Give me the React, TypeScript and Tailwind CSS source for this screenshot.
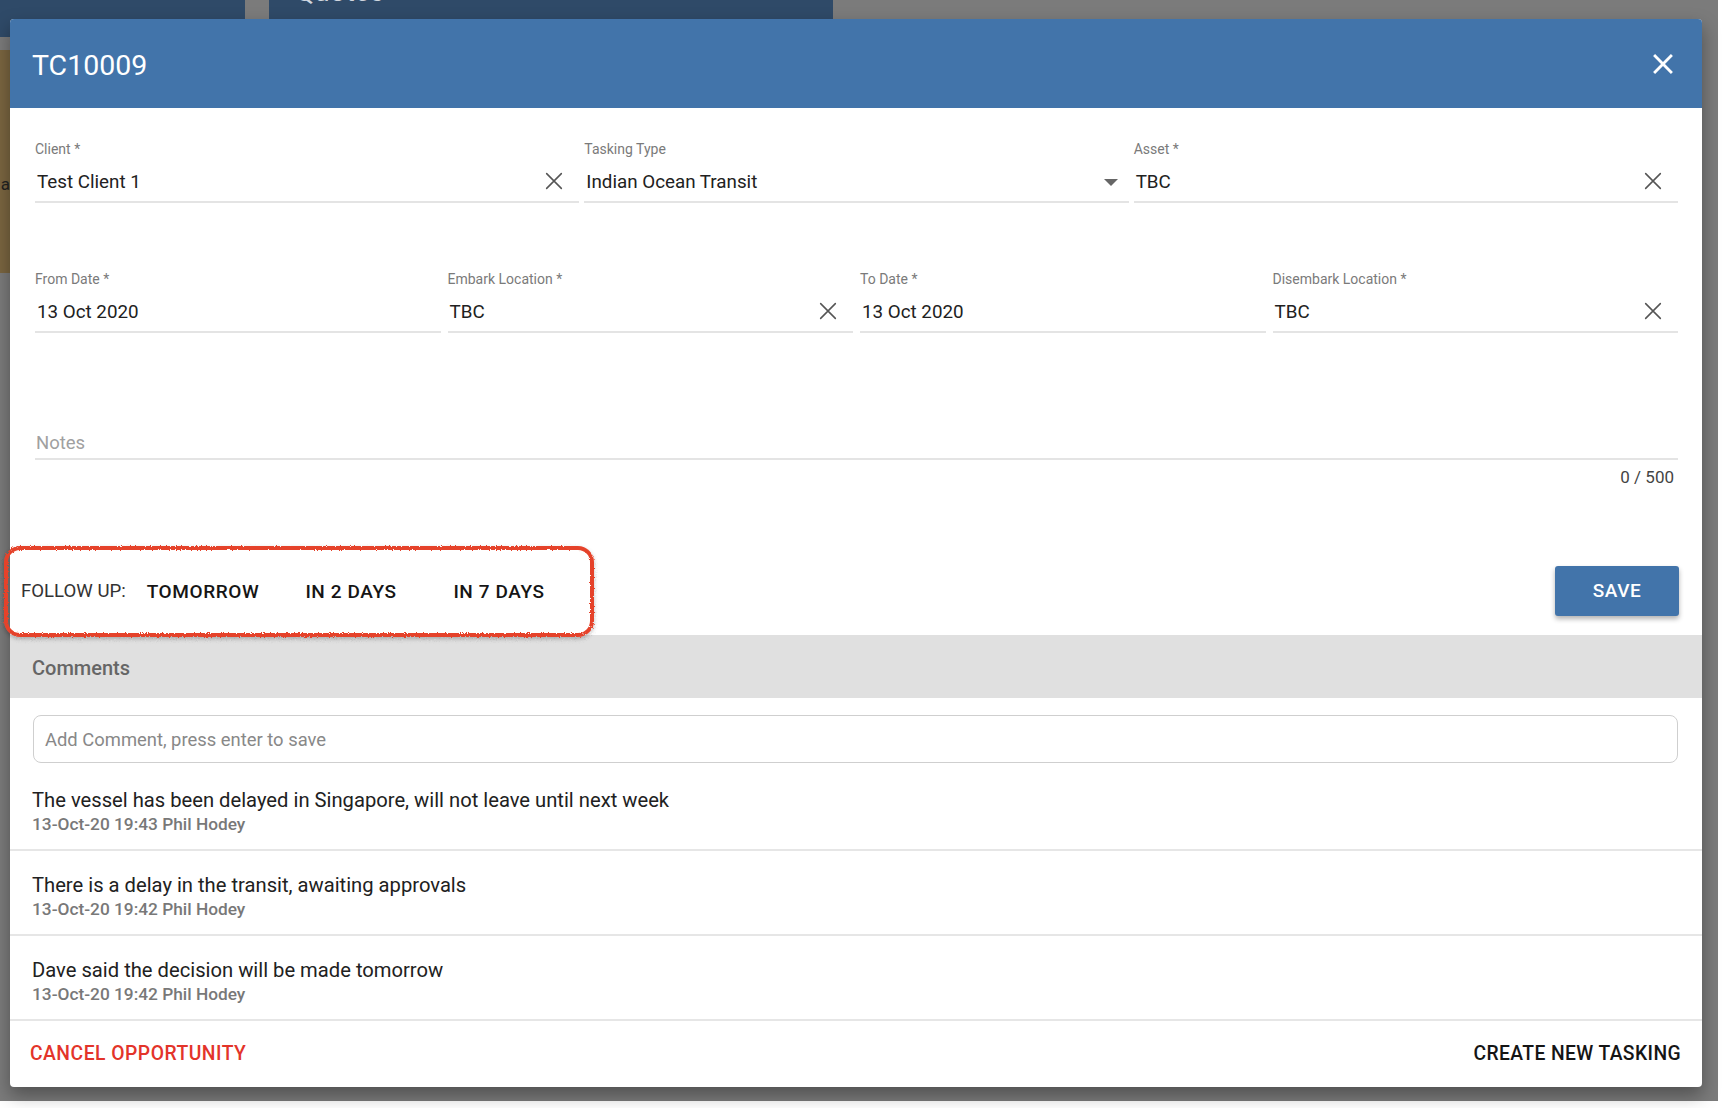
import React from "react";

const ClearIcon: React.FC<{ className?: string }> = ({ className }) => (
  <svg viewBox="0 0 24 24" className={className} fill="none" stroke="currentColor" strokeWidth={1.7} strokeLinecap="round">
    <path d="M4 4l16 16M20 4L4 20" />
  </svg>
);

const CloseIcon: React.FC<{ className?: string }> = ({ className }) => (
  <svg viewBox="0 0 24 24" className={className} fill="currentColor">
    <path d="M19 6.41 17.59 5 12 10.59 6.41 5 5 6.41 10.59 12 5 17.59 6.41 19 12 13.41 17.59 19 19 17.59 13.41 12z" />
  </svg>
);

type FieldProps = {
  label: string;
  value: string;
  clearable?: boolean;
  dropdown?: boolean;
};

const Field: React.FC<FieldProps> = ({ label, value, clearable, dropdown }) => (
  <div className="flex flex-col">
    <span className="text-[14px] leading-[16px] text-[#7a7a7a]">{label}</span>
    <div className="mt-[13px] flex h-[33px] items-start border-b-2 border-[#e4e4e4] pb-[7px]">
      <span className="flex-1 pl-[2px] text-[18.8px] leading-[24px] text-[#212121]">{value}</span>
      {clearable && <ClearIcon className="mr-[14px] h-[22px] w-[22px] text-[#555]" />}
      {dropdown && (
        <svg viewBox="0 0 14 7" className="mr-[11px] mt-[9px] h-[7px] w-[14px] text-[#666]" fill="currentColor">
          <path d="M0 0h14L7 7z" />
        </svg>
      )}
    </div>
  </div>
);

const comments = [
  { text: "The vessel has been delayed in Singapore, will not leave until next week", meta: "13-Oct-20 19:43 Phil Hodey" },
  { text: "There is a delay in the transit, awaiting approvals", meta: "13-Oct-20 19:42 Phil Hodey" },
  { text: "Dave said the decision will be made tomorrow", meta: "13-Oct-20 19:42 Phil Hodey" },
];

export default function App() {
  return (
    <div className="h-[1108px] w-[1722px] overflow-hidden bg-white font-['Roboto',sans-serif]">
      {/* marker-pen look for the highlight ring */}
      <svg width="0" height="0" className="absolute">
        <filter id="marker">
          <feTurbulence type="fractalNoise" baseFrequency="0.8" numOctaves="2" seed="3" />
          <feDisplacementMap in="SourceGraphic" scale="3" />
        </filter>
      </svg>
      <div className="relative h-[1101px] w-[1718px] bg-[#7b7b7b]">
        {/* page behind the dialog */}
        <div className="flex h-[37px]">
          <div className="w-[245px] bg-[#2f4a68]" />
          <div className="w-[24px]" />
          <div className="h-[19px] w-[564px] overflow-hidden bg-[#2f4a68]">
            <span className="-mt-[22px] ml-[26px] block text-[28px] leading-[28px] text-[#cfd6df]">Quotes</span>
          </div>
        </div>
        <div className="mt-[13px] flex h-[223px] w-[10px] items-start justify-end overflow-hidden bg-[#7a6540] pt-[126px]">
          <span className="text-[17px] leading-none text-[#222]">a</span>
        </div>

        {/* dialog */}
        <div className="absolute left-[10px] top-[19px] flex w-[1692px] flex-col rounded-[4px] bg-white shadow-[0_8px_18px_rgba(0,0,0,0.35)]">
          <div className="flex h-[89px] items-center justify-between rounded-t-[4px] bg-[#4274aa] pl-[22px] pr-[22px]">
            <h1 className="mt-[5px] text-[28.5px] font-normal leading-none text-white">TC10009</h1>
            <CloseIcon className="h-[34px] w-[34px] text-white" />
          </div>

          <div className="flex flex-col pl-[25px] pr-[24px] pt-[33px]">
            <div className="grid grid-cols-3 gap-x-[5px]">
              <Field label="Client *" value="Test Client 1" clearable />
              <Field label="Tasking Type" value="Indian Ocean Transit" dropdown />
              <Field label="Asset *" value="TBC" clearable />
            </div>
            <div className="mt-[68px] grid grid-cols-4 gap-x-[7px]">
              <Field label="From Date *" value="13 Oct 2020" />
              <Field label="Embark Location *" value="TBC" clearable />
              <Field label="To Date *" value="13 Oct 2020" />
              <Field label="Disembark Location *" value="TBC" clearable />
            </div>
            <div className="mt-[98px] border-b-2 border-[#e4e4e4] pb-[3px] pl-[1px] text-[18.5px] leading-[24px] text-[#a0a0a0]">
              Notes
            </div>
            <div className="mt-[7px] pr-[4px] text-right text-[17px] leading-[20px] text-[#444]">0 / 500</div>
          </div>

          {/* follow up actions */}
          <div className="relative mt-[79px] flex h-[50px] items-center justify-between pl-[11px] pr-[23px]">
            <div className="flex items-center">
              <span className="w-[108px] text-[18.6px] leading-none text-[#333]">FOLLOW UP:</span>
              <button className="w-[148px] text-center text-[19px] font-medium leading-none tracking-[0.6px] text-[#151515]">TOMORROW</button>
              <button className="w-[148px] text-center text-[19px] font-medium leading-none tracking-[0.6px] text-[#151515]">IN 2 DAYS</button>
              <button className="w-[148px] text-center text-[19px] font-medium leading-none tracking-[0.6px] text-[#151515]">IN 7 DAYS</button>
            </div>
            <button className="h-[50px] w-[124px] rounded-[3px] bg-[#4274aa] text-[19px] font-medium tracking-[0.5px] text-white shadow-[0_3px_5px_rgba(0,0,0,0.3)]">
              SAVE
            </button>
            <div className="pointer-events-none absolute -left-[6px] -top-[20px] h-[91px] w-[590px] rounded-[16px] border-[4px] border-[#e5432b] shadow-[0_2px_4px_rgba(0,0,0,0.25)] [filter:url(#marker)]" />
          </div>

          {/* comments */}
          <div className="mt-[19px] flex h-[63px] items-center bg-[#e0e0e0] pl-[22px]">
            <span className="mt-[3px] text-[20px] font-medium text-[#666]">Comments</span>
          </div>
          <div className="ml-[23px] mr-[24px] mt-[17px] flex h-[48px] items-center rounded-[8px] border border-[#cfcfcf] pl-[11px]">
            <span className="mt-[1px] text-[18.4px] text-[#888]">Add Comment, press enter to save</span>
          </div>
          <div className="mt-[3px] flex flex-col">
            {comments.map((c) => (
              <div key={c.text + c.meta} className="flex flex-col border-b-2 border-[#e6e6e6] px-[22px] pb-[14px] pt-[22px]">
                <span className="text-[20.2px] leading-[24px] text-[#212121]">{c.text}</span>
                <span className="mt-[1px] text-[17.3px] font-medium leading-[22px] text-[#787878]">{c.meta}</span>
              </div>
            ))}
          </div>

          <div className="flex h-[66px] items-center justify-between pl-[20px] pr-[21px]">
            <button className="text-[19.3px] font-medium tracking-[0.5px] text-[#e3342a]">CANCEL OPPORTUNITY</button>
            <button className="text-[19.3px] font-medium tracking-[0.4px] text-[#151515]">CREATE NEW TASKING</button>
          </div>
        </div>
      </div>
    </div>
  );
}
